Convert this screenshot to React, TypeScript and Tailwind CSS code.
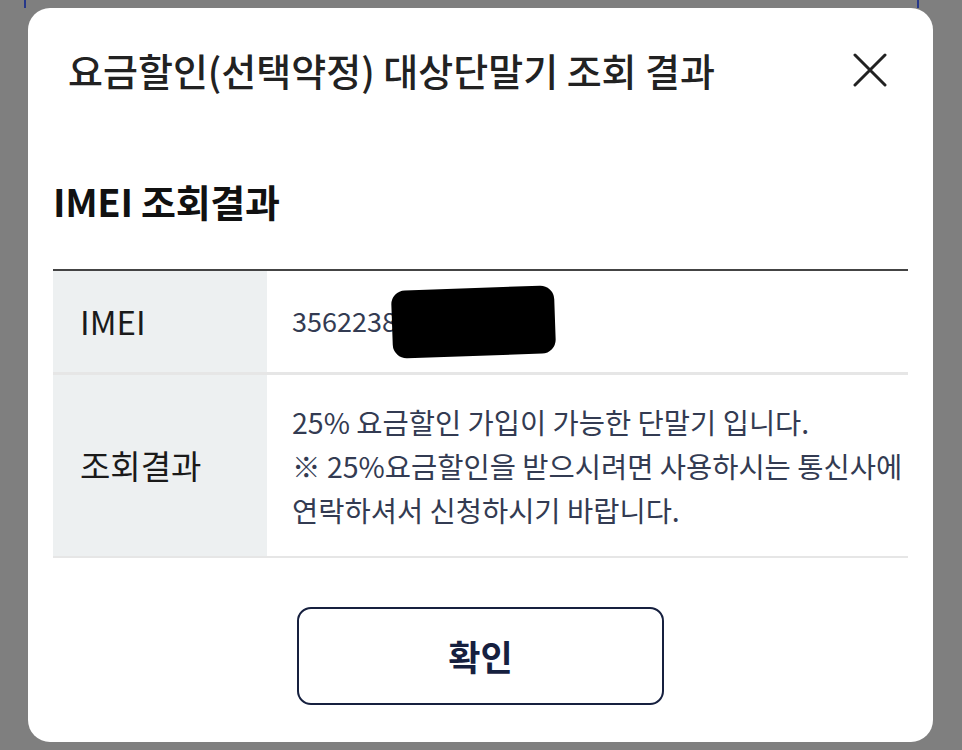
const font = { fontFamily: '"Noto Sans CJK KR", "Noto Sans", sans-serif' };

function CloseIcon() {
  return (
    <svg width="34" height="34" viewBox="0 0 34 34" fill="none" stroke="#222" strokeWidth="3" strokeLinecap="round">
      <path d="M2 2L32 32M32 2L2 32" />
    </svg>
  );
}

export default function App() {
  return (
    <div className="min-h-[750px] w-full bg-[#7f7f7f] flex flex-col" style={font}>
      {/* underlying page edge */}
      <div className="h-2 ml-[24px] w-[895px] border-x-2 border-[#27388a]" />

      <div className="ml-[28px] w-[905px] h-[734px] bg-white rounded-[22px] px-[25px] flex flex-col">
        {/* Header */}
        <div className="flex items-center justify-between pl-[15px] pr-[21px] pt-[38px]">
          <h2 className="text-[38px] leading-[48px] text-[#222] font-medium">
            요금할인(선택약정) 대상단말기 조회 결과
          </h2>
          <CloseIcon />
        </div>

        {/* Section title */}
        <h3 className="mt-[83px] text-[38px] leading-[48px] font-bold text-[#111] tracking-[-0.3px]">
          IMEI 조회결과
        </h3>

        {/* Table */}
        <div className="mt-[44px] border-t-2 border-[#444]">
          <div className="flex border-b-[3px] border-[#e6e6e6]">
            <div className="w-[214px] h-[101px] bg-[#edf0f1] flex items-center pl-[27px] text-[33px] text-[#1a1a1a]">
              IMEI
            </div>
            <div className="relative flex-1 flex items-center pl-[25px] text-[27px] text-[#333b52]">
              3562238
              <div className="absolute left-[125px] top-[17px] w-[163px] h-[68px] bg-black rounded-[14px] rotate-[-2deg]" />
            </div>
          </div>
          <div className="flex border-b-2 border-[#e6e6e6]">
            <div className="w-[214px] h-[181px] bg-[#edf0f1] flex items-center pl-[27px] text-[33px] text-[#1a1a1a]">
              조회결과
            </div>
            <div className="flex-1 flex flex-col justify-center pl-[25px] text-[28.5px] leading-[44px] text-[#333b52]">
              <p>25% 요금할인 가입이 가능한 단말기 입니다.</p>
              <p>※ 25%요금할인을 받으시려면 사용하시는 통신사에</p>
              <p>연락하셔서 신청하시기 바랍니다.</p>
            </div>
          </div>
        </div>

        {/* Confirm */}
        <div className="flex justify-center mt-[49px]">
          <button className="w-[367px] h-[98px] border-2 border-[#16203f] rounded-[14px] text-[35px] font-bold text-[#16203f]">
            확인
          </button>
        </div>
      </div>
    </div>
  );
}
